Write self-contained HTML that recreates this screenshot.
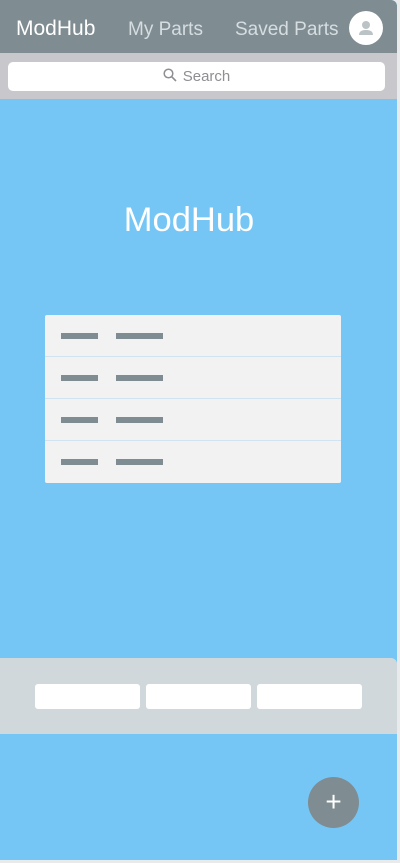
<!DOCTYPE html>
<html><head><meta charset="utf-8"><style>
*{margin:0;padding:0;box-sizing:border-box}
body{width:400px;height:863px;background:#e8eaec;font-family:"Liberation Sans",sans-serif;position:relative;overflow:hidden}
.page{position:absolute;left:0;top:0;width:397px;height:860px;background:#76c6f5;border-radius:0 6px 0 0;overflow:hidden}
.hdr{position:absolute;left:0;top:0;width:397px;height:53px;background:#7f8c92;border-radius:0 6px 0 0}
.hdr span{position:absolute;top:19px;font-size:19px;color:#d5dde1}
.sb{position:absolute;left:0;top:53px;width:397px;height:46px;background:#c8c7cc}
.inp{position:absolute;left:8px;top:9px;width:377px;height:29px;background:#fff;border-radius:5px;color:#8e8e93;font-size:15px;text-align:center;line-height:29px}
.title{position:absolute;left:0;width:378px;top:201px;text-align:center;color:#fff;font-size:34.5px}
.list{position:absolute;left:45px;top:315px;width:296px;height:168px;background:#f2f2f2;border-radius:2px}
.row{height:42px;border-bottom:1px solid #cfe3f1;position:relative}
.row:last-child{border-bottom:none}
.row i{position:absolute;top:18px;height:6px;background:#7f8c92}
.bp{position:absolute;left:0;top:658px;width:397px;height:76px;background:#d1d8dc;border-radius:0 6px 0 0}
.bp b{position:absolute;top:26px;width:105px;height:25px;background:#fff;border-radius:3px}
.fab{position:absolute;left:308px;top:777px;width:51px;height:51px;border-radius:50%;background:#7f8c92;color:#fff;font-size:28px;text-align:center;line-height:49px}
</style></head><body>
<div class="page">
<div class="hdr">
<span style="left:16px;color:#fff;font-size:21px;top:17px">ModHub</span>
<span style="left:128px">My Parts</span>
<span style="left:235px">Saved Parts</span>
<div style="position:absolute;left:349px;top:11px;width:34px;height:34px;border-radius:50%;background:#fff">
<svg width="34" height="34" viewBox="0 0 34 34"><circle cx="17" cy="14" r="4" fill="#bcc3c7"/><path d="M10 24c0-4 3.5-5 7-5s7 1 7 5z" fill="#bcc3c7"/></svg>
</div>
</div>
<div class="sb"><div class="inp"><svg width="14" height="14" viewBox="0 0 14 14" style="vertical-align:-1px;margin-right:6px"><circle cx="5.5" cy="5.5" r="4.3" fill="none" stroke="#8e8e93" stroke-width="1.5"/><path d="M8.8 8.8L13 13" stroke="#8e8e93" stroke-width="1.6"/></svg>Search</div></div>
<div class="title">ModHub</div>
<div class="list">
<div class="row"><i style="left:16px;width:37px"></i><i style="left:71px;width:47px"></i></div>
<div class="row"><i style="left:16px;width:37px"></i><i style="left:71px;width:47px"></i></div>
<div class="row"><i style="left:16px;width:37px"></i><i style="left:71px;width:47px"></i></div>
<div class="row"><i style="left:16px;width:37px"></i><i style="left:71px;width:47px"></i></div>
</div>
<div class="bp"><b style="left:35px"></b><b style="left:146px"></b><b style="left:257px"></b></div>
<div class="fab">+</div>
</div>
</body></html>
